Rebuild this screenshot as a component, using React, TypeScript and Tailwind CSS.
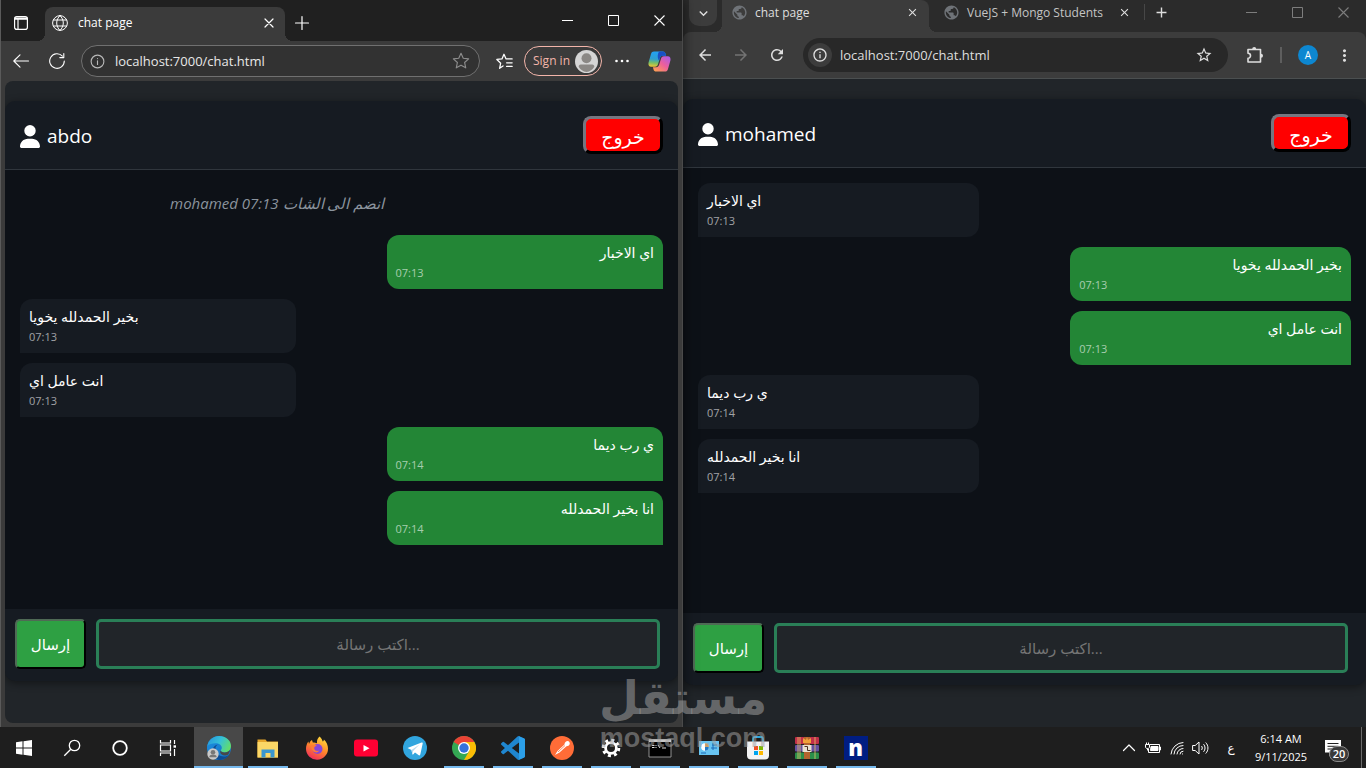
import React from 'react';
import { FaUser } from 'react-icons/fa6';
import {
  MdAdd, MdArrowBack, MdArrowForward, MdClose, MdExpandMore, MdInfoOutline, MdMoreVert,
  MdPublic, MdRefresh, MdStarOutline,
} from 'react-icons/md';

type Message = { text: string; time: string; mine: boolean };

const abdoMessages: Message[] = [
  { text: 'اي الاخبار', time: '07:13', mine: true },
  { text: 'بخير الحمدلله يخويا', time: '07:13', mine: false },
  { text: 'انت عامل اي', time: '07:13', mine: false },
  { text: 'ي رب ديما', time: '07:14', mine: true },
  { text: 'انا بخير الحمدلله', time: '07:14', mine: true },
];

const mohamedMessages: Message[] = abdoMessages.map(m => ({ ...m, mine: !m.mine }));

const Line = ({ d, className = 'size-4', width = 1.2 }: { d: string; className?: string; width?: number }) => (
  <svg viewBox="0 0 16 16" className={className} fill="none" stroke="currentColor" strokeWidth={width} strokeLinecap="round" strokeLinejoin="round" aria-hidden="true">
    <path d={d} />
  </svg>
);

const IconButton = ({ label, className, children }: { label: string; className: string; children: React.ReactNode }) => (
  <button type="button" aria-label={label} className={`flex shrink-0 items-center justify-center ${className}`}>{children}</button>
);

const star = 'M8 1.2l2 4.4 4.8.5-3.6 3.2 1 4.8L8 11.7l-4.2 2.4 1-4.8L1.2 6.1 6 5.6z';

const WindowControls = ({ className }: { className: string }) => (
  <div className={`ml-auto flex ${className}`}>
    <IconButton label="Minimize" className="h-8 w-[46px]"><svg viewBox="0 0 11 11" className="size-[11px]" stroke="currentColor"><path d="M0 5.5h11" /></svg></IconButton>
    <IconButton label="Maximize" className="h-8 w-[46px]"><svg viewBox="0 0 11 11" className="size-[11px]" stroke="currentColor" fill="none"><path d="M.5.5h10v10H.5z" /></svg></IconButton>
    <IconButton label="Close" className="h-8 w-[46px]"><svg viewBox="0 0 11 11" className="size-[11px]" stroke="currentColor" strokeWidth="1.1"><path d="M.5.5l10 10M10.5.5l-10 10" /></svg></IconButton>
  </div>
);

const Chat = ({ name, joined, messages }: { name: string; joined?: string; messages: Message[] }) => (
  <section className="flex flex-1 flex-col overflow-hidden rounded-[10px] bg-[#161b22] text-white shadow-[0_2px_8px_rgba(0,0,0,0.45)]">
    <header className="flex h-[69px] items-start justify-between border-b border-[#30363d] px-[15px] pt-[15px]">
      <h1 className="flex items-center gap-[7px] text-[19px] leading-10">
        <FaUser className="h-[23px] w-5" />
        {name}
      </h1>
      <button type="button" className="flex h-[38px] w-20 items-center justify-center rounded-lg border-[3px] border-t-[#767680] border-r-black border-b-black border-l-[#767680] bg-[#ff0000] pt-1 text-[19px] leading-6 font-medium">خروج</button>
    </header>
    <div className="flex flex-1 flex-col gap-[10px] bg-[#0d1117] p-[15px]">
      {joined && <p className="mb-1 w-4/5 text-center text-[15px] leading-9 text-[#8b949e] italic">{joined}</p>}
      {messages.map((m, i) => (
        <div key={i} className={m.mine
          ? 'w-[43%] self-end rounded-xl rounded-br-none bg-[#238636] px-[9px] pt-[6px] pb-2'
          : 'w-[43%] self-start rounded-xl rounded-bl-none bg-[#161b22] px-[9px] pt-[6px] pb-2'}>
          <p className={m.mine ? 'text-right text-[14px] leading-6' : 'text-left text-[14px] leading-6'}>{m.text}</p>
          <time className="block text-[11px] leading-4 text-white/60">{m.time}</time>
        </div>
      ))}
    </div>
    <form className="flex h-[72px] items-start gap-[10px] py-[10px] pr-[18px] pl-[10px]" onSubmit={e => e.preventDefault()}>
      <button type="submit" className="h-[50px] w-[71px] shrink-0 rounded-[5px] border-2 border-t-[#4f6a55] border-r-black border-b-black border-l-[#4f6a55] bg-[#2ea043] text-[15px] leading-6">إرسال</button>
      <input type="text" aria-label="اكتب رسالة" placeholder="اكتب رسالة..." className="h-[50px] min-w-0 flex-1 rounded-[5px] border-[3px] border-[#2a7f57] bg-[#212529] text-center text-[15px] text-white outline-none placeholder:text-[#757575]" />
    </form>
  </section>
);

const EdgeWindow = () => (
  <div className="relative z-10 flex flex-col border-x border-l-[#5a5a5a] border-r-[#4a4a4a] bg-[#3b3b3b] text-white shadow-[0_0_12px_rgba(0,0,0,0.6)]">
    <div className="flex h-[41px] items-center bg-[#202020]">
      <IconButton label="Tab actions" className="h-8 w-10 pt-1">
        <svg viewBox="0 0 14 14" className="size-[14px]" fill="none" stroke="currentColor" strokeWidth="1.2"><rect x=".6" y=".6" width="12.8" height="12.8" rx="2.2" /><path d="M.6 3.2h12.8M.6 2.2h12.8M4 3.5v10" /></svg>
      </IconButton>
      <div className="relative ml-1 flex h-[34px] w-60 items-center self-end rounded-t-lg bg-[#3b3b3b] pr-2 pb-[2px] pl-[7px]">
        <span className="absolute bottom-0 -left-2 size-2 bg-[radial-gradient(circle_at_0_0,transparent_8px,#3b3b3b_8px)]" />
        <span className="absolute -right-2 bottom-0 size-2 bg-[radial-gradient(circle_at_100%_0,transparent_8px,#3b3b3b_8px)]" />
        <Line d="M8 .6a7.4 7.4 0 100 14.8A7.4 7.4 0 008 .6zM8 .6c-4.5 4-4.5 10.8 0 14.8M8 .6c4.5 4 4.5 10.8 0 14.8M1.4 5h13.2M1.4 11h13.2" width={1} />
        <span className="ml-[10px] flex-1 text-[12px] leading-4">chat page</span>
        <IconButton label="Close tab" className="size-4"><Line d="M4 4l8 8M12 4l-8 8" /></IconButton>
      </div>
      <IconButton label="New tab" className="h-8 w-[34px] pt-1"><Line d="M8 1.5v13M1.5 8h13" width={1.2} /></IconButton>
      <WindowControls className="text-white" />
    </div>
    <div className="flex h-10 items-center pr-[6px] pl-[2px]">
      <IconButton label="Back" className="h-8 w-9"><Line d="M15.5 8H.8M7 1.8L.8 8 7 14.2" width={1.1} /></IconButton>
      <IconButton label="Refresh" className="h-8 w-9"><Line d="M15.3 8A7.3 7.3 0 1113.4 3.1M14.8.6v4h-4" width={1.1} /></IconButton>
      <div className="ml-[6px] flex h-8 min-w-0 flex-1 items-center rounded-full border border-[#707070] bg-[#323232] px-2">
        <Line d="M8 1.2a6.8 6.8 0 100 13.6A6.8 6.8 0 008 1.2zM8 7.2v4M8 4.8v.1" className="size-[15px] shrink-0 text-[#b8b8b8]" />
        <input type="text" aria-label="Address" defaultValue="localhost:7000/chat.html" className="ml-[10px] min-w-0 flex-1 bg-transparent text-[13px] leading-5 text-[#e8e8e8] outline-none" />
        <IconButton label="Add to favorites" className="mr-[2px] size-4 text-[#8d8d8d]"><Line d={star} className="size-[18px] shrink-0" width={1} /></IconButton>
      </div>
      <IconButton label="Favorites" className="ml-1 h-8 w-10"><Line d="M6.6 12.2L3.4 14.4l1-4.8L.8 6.1l4.8-.5L7.5 1.2l2 4.4h5.7M10 9.2h5.2M10 12.6h5.2" width={1.2} className="size-[17px]" /></IconButton>
      <button type="button" className="flex h-[30px] w-[78px] shrink-0 items-center justify-between rounded-full border border-[#f3b5aa] pr-[3px] pl-2 text-[12px] leading-4 text-[#f3b5aa]">
        Sign in
        <svg viewBox="0 0 24 24" className="size-[23px] shrink-0"><circle cx="12" cy="12" r="12" fill="#d5d5d5" /><circle cx="12" cy="8.7" r="5.2" fill="#8b8885" /><path d="M3.8 17.5c0-2.2 2-2.4 3.5-2.4h9.4c1.5 0 3.5.2 3.5 2.4A11.5 11.5 0 0112 23a11.5 11.5 0 01-8.2-5.5z" fill="#8b8885" /></svg>
      </button>
      <IconButton label="Settings and more" className="h-8 w-10"><svg viewBox="0 0 16 16" className="size-4" fill="currentColor"><circle cx="2.5" cy="8" r="1.3" /><circle cx="8" cy="8" r="1.3" /><circle cx="13.5" cy="8" r="1.3" /></svg></IconButton>
      <IconButton label="Copilot" className="h-8 w-[34px]">
        <svg viewBox="0 0 24 24" className="size-[23px]">
          <defs>
            <linearGradient id="copA" x1=".4" y1="0" x2=".3" y2="1"><stop stopColor="#22a0f5" /><stop offset=".5" stopColor="#2e9fd0" /><stop offset=".75" stopColor="#78bf65" /><stop offset="1" stopColor="#f0c534" /></linearGradient>
            <linearGradient id="copB" x1="1" y1="0" x2=".1" y2="1"><stop stopColor="#a45bf0" /><stop offset=".5" stopColor="#ec5f9c" /><stop offset="1" stopColor="#ffa24f" /></linearGradient>
          </defs>
          <path d="M6.2 1.500h9.300c1.500 0 2.300.8 2.700 2.200L18.900 6h-3.400c-1.700 0-2.600.8-3.100 2.500l-1.900 6.200c-.5 1.800-1.400 2.800-3.200 2.800H3.500C1 17.500 0 15.500.6 13L3.200 4C3.700 2.300 4.700 1.500 6.200 1.500z" fill="url(#copA)" />
          <path d="M17.800 22.500H8.500c-1.500 0-2.300-.8-2.700-2.200L5.100 18h3.400c1.700 0 2.600-.8 3.100-2.500l1.900-6.200c.5-1.800 1.400-2.800 3.200-2.800h3.800c2.500 0 3.500 2 2.900 4.500l-2.600 9c-.5 1.700-1.500 2.500-3 2.500z" fill="url(#copB)" />
          <path d="M11.500 1.500h4c1.500 0 2.300.8 2.700 2.200L18.900 6h-3.400c-1.700 0-2.600.8-3.100 2.500L11.500 11C9.500 8 10 4 11.500 1.500z" fill="#1a4fc4" />
        </svg>
      </IconButton>
    </div>
    <main className="mx-1 mb-1 flex flex-1 flex-col overflow-hidden rounded-lg bg-[#212529] pt-5 pb-[42px]">
      <Chat name="abdo" joined="mohamed 07:13 انضم الى الشات" messages={abdoMessages} />
    </main>
  </div>
);

const ChromeWindow = () => (
  <div className="flex flex-col bg-[#2b2b2b] text-[#dedede]">
    <div className="flex h-8 items-start pl-[6px]">
      <IconButton label="Search tabs" className="h-[26px] w-7 rounded-b-[10px] bg-[#3c3c3c]"><MdExpandMore className="size-[17px]" /></IconButton>
      <div className="relative ml-[5px] flex h-8 w-[207px] items-center rounded-tr-lg bg-[#3c3c3c] pr-[9px] pb-[7px] pl-[9px]">
        <span className="absolute bottom-0 -left-2 size-2 bg-[radial-gradient(circle_at_0_0,transparent_8px,#3c3c3c_8px)]" />
        <span className="absolute -right-2 bottom-0 size-2 bg-[radial-gradient(circle_at_100%_0,transparent_8px,#3c3c3c_8px)]" />
        <MdPublic className="size-[17px] text-[#6f7378]" />
        <span className="ml-[7px] flex-1 text-[12px] leading-4">chat page</span>
        <IconButton label="Close tab" className="size-4"><MdClose className="size-[13px]" /></IconButton>
      </div>
      <div className="flex h-[25px] w-[215px] items-center pr-3 pl-[14px]">
        <MdPublic className="size-[17px] text-[#6f7378]" />
        <span className="ml-[7px] flex-1 text-[12px] leading-4 whitespace-nowrap text-[#c4c4c4]">VueJS + Mongo Students</span>
        <IconButton label="Close tab" className="size-4"><MdClose className="size-[13px]" /></IconButton>
      </div>
      <span className="mt-1 h-4 w-px bg-[#474747]" />
      <IconButton label="New tab" className="h-[25px] w-8"><MdAdd className="size-[17px]" /></IconButton>
      <WindowControls className="-mt-1 text-[#7d7d7d]" />
    </div>
    <div className="flex h-[47px] items-center rounded-t-lg border-b border-[#4b4f50] bg-[#3c3c3c] px-1">
      <IconButton label="Back" className="h-8 w-9"><MdArrowBack className="size-[18px]" /></IconButton>
      <IconButton label="Forward" className="h-8 w-9 text-[#737373]"><MdArrowForward className="size-[18px]" /></IconButton>
      <IconButton label="Reload" className="h-8 w-9"><MdRefresh className="size-[18px]" /></IconButton>
      <div className="ml-2 flex h-[34px] min-w-0 flex-1 items-center rounded-full bg-[#282828] pr-4 pl-[5px]">
        <span className="flex size-6 shrink-0 items-center justify-center rounded-full bg-[#3c3c3c]"><MdInfoOutline className="size-4" /></span>
        <input type="text" aria-label="Address" defaultValue="localhost:7000/chat.html" className="ml-2 min-w-0 flex-1 bg-transparent text-[13px] leading-5 outline-none" />
        <IconButton label="Bookmark" className="size-4"><MdStarOutline className="size-[18px] shrink-0" /></IconButton>
      </div>
      <IconButton label="Extensions" className="ml-[2px] h-8 w-[50px]">
        <svg viewBox="0 0 18 18" className="size-[18px]"><path d="M2 3.500h12.500v12.500H2v-3.800a2.500 2.500 0 000-5z" fill="none" stroke="currentColor" strokeWidth="1.600" strokeLinejoin="round" /><path d="M6.200 3a2 2 0 014 0zM15 7.800a2 2 0 010 4z" fill="currentColor" /></svg>
      </IconButton>
      <span className="h-4 w-[2px] bg-[#5e5e5e]" />
      <IconButton label="Profile" className="ml-4 size-5 rounded-full bg-[#0d87d1] text-[10px] leading-4 text-white">A</IconButton>
      <IconButton label="Menu" className="ml-2 h-8 w-9"><MdMoreVert className="size-[19px]" /></IconButton>
    </div>
    <main className="flex flex-1 flex-col bg-[#212529] pt-5 pb-[42px]">
      <Chat name="mohamed" messages={mohamedMessages} />
    </main>
  </div>
);

const systemItems = [
  { name: 'Start', icon: <path fill="#fff" d="M4 6.3l6.500-1v6.200H4zm7.500-1.100L20 4v7.500h-8.500zM4 12.500h6.500v6.200l-6.500-1zm7.500 0H20V20l-8.500-1.200z" /> },
  { name: 'Search', icon: <g fill="none" stroke="#fff" strokeWidth="1.3"><circle cx="14.5" cy="9.5" r="5.2" /><path d="M10.8 13.300L4.300 19.800" /></g> },
  { name: 'Cortana', icon: <circle cx="12" cy="12" r="6.800" fill="none" stroke="#fff" strokeWidth="1.800" /> },
  { name: 'Task View', icon: <g fill="none" stroke="#fff" strokeWidth="1.200"><path d="M4.500 4v3h10V4M4.500 20v-3h10v3M4.500 9h10v6h-10zM18.500 4v4M18.500 13v7" /><path d="M17.500 10.500h2.500" strokeWidth="2.400" /></g> },
];

const apps = [
  { name: 'Microsoft Edge', active: true, open: true, icon: <>
    <defs>
      <linearGradient id="edA" x1="0" y1=".2" x2="1" y2=".6"><stop stopColor="#2697dd" /><stop offset=".5" stopColor="#35c1d8" /><stop offset="1" stopColor="#63dd68" /></linearGradient>
      <linearGradient id="edB" x1="0" y1="0" x2="1" y2="1"><stop stopColor="#1c8fe0" /><stop offset="1" stopColor="#1472c4" /></linearGradient>
    </defs>
    <circle cx="12" cy="12" r="12" fill="url(#edB)" />
    <path d="M8.500 12c0 5 4 8.500 8.500 8.500 2 0 4-.6 5-1.800C20 22 16 24 12 24 8 23 5.500 19 5.500 15c0-3.500 2.500-6.500 6-6.500-2 .5-3 2-3 3.500z" fill="#0d4c94" />
    <path d="M.3 10C1.500 4.200 6.200 0 12 0c7 0 12 4.500 12 10 0 3.800-2.800 6.400-6.300 6.400-2.600 0-3.900-1.100-3.900-1.900 0-.6 1-1.100 1-2.800C14.800 9 12 7.200 8.500 7.200 5 7.200 2 8 .3 10z" fill="url(#edA)" />
    <path d="M13.800 14.500c0 .8 1.300 1.900 3.900 1.900 2 0 4-.9 5.300-2.300-.3 2-1 3.500-2 4.700-2 .9-4.500.9-6.300-.3-1.700-1-2-3-.9-4z" fill="#484848" />
    <circle cx="6" cy="18" r="5.700" fill="#c9c9c9" /><circle cx="6" cy="16.300" r="2.300" fill="#777" /><path d="M2.300 21.200a3.700 2.800 0 017.400 0z" fill="#777" /></> },
  { name: 'File Explorer', open: true, icon: <><path d="M1.500 3.500h8l1.500 2h11v16h-20.500z" fill="#e6a62b" /><path d="M1.500 6h20.500v15.500H1.500z" fill="#fbd766" /><path d="M5.500 21.500v-8h13v8h-4V17h-5v4.500z" fill="#3a97cf" /></> },
  { name: 'Firefox', icon: <>
    <defs><linearGradient id="ffA" x1=".8" y1="0" x2=".3" y2="1"><stop stopColor="#ffe23e" /><stop offset=".5" stopColor="#ff8a2a" /><stop offset="1" stopColor="#f02a5d" /></linearGradient></defs>
    <path d="M14.500.5c2 1.800 2.700 3.500 3.200 5 .8-.3 1.200-1.300 1.200-2 2.800 2.700 4.100 5.900 4.100 9A11 11 0 011 13c0-3 .8-5.500 2.400-7.500L4 8c.5-1.500 1.300-3 3-4l.8 2.500c2 0 3.200.3 4.200.8-.3-3 .5-5 2.500-6.800z" fill="url(#ffA)" /><circle cx="12.500" cy="13" r="5" fill="#8746d8" /><path d="M6 9.500c2.200-1.300 4.500-.9 6 .5-2.500.2-3 1.500-2.700 2.700.4 2 2.800 2.700 5 1.900C12 18.500 6 16 6 9.500z" fill="#ff7c35" /></> },
  { name: 'YouTube', icon: <><rect x="0" y="3.500" width="24" height="17" rx="3" fill="#ff0033" /><path d="M9.500 9v6.500l6-3.200z" fill="#fff" /></> },
  { name: 'Telegram', icon: <><circle cx="12" cy="12" r="12" fill="#31a5de" /><path d="M4.500 12L18.600 6.500c.7-.3 1.300.2 1.100 1.100l-2.400 11c-.2.800-.8 1-1.500.6L12 16.500l-1.900 1.900c-.3.3-.7.3-.8-.3L8.500 14z" fill="#fff" /><path d="M8.500 14l8-5.500-6.400 6.500-.6 3.500z" fill="#b9d9ec" /></> },
  { name: 'Chrome', open: true, icon: <><circle cx="12" cy="12" r="12" fill="#34a853" /><path d="M12 12L1.600 6A12 12 0 0122.400 6z" fill="#ea4335" /><path d="M12 6h10.400A12 12 0 0112 24l5.200-9z" fill="#fbbc05" /><circle cx="12" cy="12" r="6" fill="#fff" /><circle cx="12" cy="12" r="4.700" fill="#3472dc" /></> },
  { name: 'Visual Studio Code', open: true, icon: <>
    <path d="M23.150 2.587L18.210.21a1.494 1.494 0 0 0-1.705.29l-9.460 8.630-4.120-3.128a.999.999 0 0 0-1.276.057L.327 7.261A1 1 0 0 0 .326 8.740L3.899 12 .326 15.260a1 1 0 0 0 .001 1.479L1.650 17.940a.999.999 0 0 0 1.276.057l4.120-3.128 9.460 8.630a1.492 1.492 0 0 0 1.704.290l4.942-2.377A1.500 1.500 0 0 0 24 20.060V3.939a1.500 1.500 0 0 0-.850-1.352zm-5.146 14.861L10.826 12l7.178-5.448v10.896z" fill="#1f86cf" />
    <path d="M18 .2l5.200 2.400c.5.300.8.8.8 1.400v16c0 .6-.3 1.100-.8 1.400L18 23.800z" fill="#2c9fe8" /></> },
  { name: 'Postman', open: true, icon: <><circle cx="12" cy="12" r="12" fill="#ff6c37" /><path d="M5 19l2.500-4L15 8l2 1.800-7.500 6.700z" fill="#fff" /><path d="M14.500 8.300c0-2.800 3.500-4.300 4.800-2.300s-.3 4.300-2.800 4.200z" fill="#fff" /><path d="M8 16l7-6.500" stroke="#ff6c37" strokeWidth=".8" /></> },
  { name: 'Settings', open: true, icon: <g fill="none" stroke="#fff"><circle cx="12" cy="12" r="5.400" strokeWidth="2.800" /><circle cx="12" cy="12" r="7.800" strokeWidth="3" strokeDasharray="3 3.126" /></g> },
  { name: 'Command Prompt', open: true, icon: <><path d="M1 3.500h22v17.500H1z" fill="#000" stroke="#909090" /><path d="M1 3.500h22v2.500H1z" fill="#c8c8c8" /><path d="M4 9.500h2.500M4 11.500h2.500M8 9v1M8 11v1M10 9l2 3M14 12h4" stroke="#ddd" strokeWidth="1" /></> },
  { name: 'Control Panel', open: true, icon: <><rect x="2" y="5" width="20" height="14" fill="#68c4f1" /><circle cx="8" cy="11" r="3.800" fill="#fff" /><path d="M8 11V7.200A3.800 3.800 0 0111.800 11z" fill="#ee9b2b" /><path d="M8 11h3.800A3.800 3.800 0 018 14.800z" fill="#207ac8" /><path d="M15 9h5M14 12h6M16 7v7M4 17h5" stroke="#1b6bb8" /></> },
  { name: 'Microsoft Store', open: true, icon: <><path d="M7 6V3c0-1.500.8-2 2-2h6c1.200 0 2 .5 2 2v3" fill="none" stroke="#2ba8df" strokeWidth="1.800" /><path d="M1 5.500h22v14c0 2.500-1.500 4-4 4H5c-2.500 0-4-1.500-4-4z" fill="#f3f3f3" /><path d="M8 10h4v4H8z" fill="#f25022" /><path d="M13 10h4v4h-4z" fill="#7fba00" /><path d="M8 15h4v4H8z" fill="#00a4ef" /><path d="M13 15h4v4h-4z" fill="#ffb900" /></> },
  { name: 'WinRAR', open: true, icon: <><rect y="1" width="24" height="7" rx="1" fill="#c02f49" /><rect y="9" width="24" height="6.500" rx="1" fill="#6550a0" /><rect y="16.500" width="24" height="6.500" rx="1" fill="#2b8f4a" /><path d="M3 1v22M5 1v22M20 1v22" stroke="#e4c36a" strokeWidth=".8" /><path d="M9 1h6v22H9z" fill="#b4642e" /><path d="M8 2l3 2 1-3 1 3 3-2v5H8z" fill="#f0a13a" /><path d="M7.500 9h9v7h-9z" fill="#e9e1d2" /><path d="M9.500 10.500h3v4h3" fill="none" stroke="#4b3022" /></> },
];

const Taskbar = () => (
  <nav aria-label="Taskbar" className="relative z-10 flex h-[41px] items-stretch bg-[#1e1e1e] text-white">
    {systemItems.map(item => (
      <IconButton key={item.name} label={item.name} className="w-12"><svg viewBox="0 0 24 24" className="size-6">{item.icon}</svg></IconButton>
    ))}
    <div className="ml-[2px] flex">
      {apps.map(app => (
        <button key={app.name} type="button" aria-label={app.name} className={app.active ? 'flex w-[49px] flex-col items-center bg-[#484848] pt-[9px]' : 'flex w-[49px] flex-col items-center pt-[9px]'}>
          <svg viewBox="0 0 24 24" className="size-6">{app.icon}</svg>
          {app.open && <span className={app.active ? 'mt-auto h-[2px] w-full bg-[#76b9ed]' : 'mt-auto h-[2px] w-10 bg-[#76b9ed]'} />}
        </button>
      ))}
      <button type="button" aria-label="n" className="flex w-[49px] flex-col items-center pt-[9px]">
        <span className="flex size-6 items-center justify-center bg-[#001d82] pb-[3px] text-[22px] leading-5 font-extrabold">n</span>
        <span className="mt-auto h-[2px] w-10 bg-[#76b9ed]" />
      </button>
    </div>
    <div className="ml-auto flex items-center">
      <IconButton label="Show hidden icons" className="h-full w-6"><Line d="M2.5 10.5L8 5l5.5 5.5" /></IconButton>
      <IconButton label="Battery" className="h-full w-6"><svg viewBox="0 0 16 16" className="size-4" fill="none" stroke="#fff"><path d="M5 4.500h9.500v8H3.500V9M14.500 7h1v3h-1M.5 4.500h4V7c0 1-.8 1.500-2 1.500S.5 8 .5 7zM1.500 2.500v2M3.500 2.500v2M2.500 8.500v2" /><path d="M6 6.500h7v4H5.500z" fill="#fff" /></svg></IconButton>
      <IconButton label="Wi-Fi" className="h-full w-6"><Line d="M2 14A12.500 12.500 0 0114 2.500M5 14a9 9 0 019-8.500M8 14a6 6 0 016-5.500M11 14a3 3 0 013-2.800M13.500 13.900v.1" width={1} /></IconButton>
      <IconButton label="Volume" className="h-full w-6"><svg viewBox="0 0 18 16" className="h-4 w-[18px]" fill="none" stroke="#fff"><path d="M.6 5.500h2.600L7 2v12l-3.800-3.500H.6zM9.500 6c1 1.200 1 2.800 0 4M11.500 4.200c2 2.200 2 5.400 0 7.600M13.700 2.500c3 3.200 3 7.800 0 11" /></svg></IconButton>
      <button type="button" aria-label="Input language" className="h-full w-9 text-[12px]">ع</button>
      <button type="button" className="w-16 text-center text-[11px] leading-[18px] whitespace-nowrap"><span className="block">6:14 AM</span><span className="block">9/11/2025</span></button>
      <IconButton label="Notifications" className="relative h-full w-10">
        <svg viewBox="0 0 16 16" className="size-4"><path d="M0 0h16v12.500H8.500L4 16v-3.500H0z" fill="#fff" /><path d="M2.500 3.500h11M2.500 6.300h11M2.500 9h7" stroke="#222" /></svg>
        <span className="absolute top-[19px] right-1 flex h-4 w-5 items-center justify-center rounded-full border border-[#8a8a8a] bg-[#3a3a3a] text-[11px] leading-4 font-semibold">20</span>
      </IconButton>
      <span className="mr-1 ml-2 h-full w-px bg-[#6a6a6a]" />
    </div>
  </nav>
);

export default function App() {
  return (
    <div className="relative flex min-h-screen flex-col bg-[#2b2b2b] font-['Open_Sans','DejaVu_Sans',sans-serif]">
      <div className="grid flex-1 grid-cols-2">
        <EdgeWindow />
        <ChromeWindow />
      </div>
      <Taskbar />
      <div className="pointer-events-none absolute bottom-4 left-1/2 z-20 flex w-[164px] -translate-x-1/2 flex-col items-center font-bold text-[#a0a0a0]/55">
        <span className="font-['DejaVu_Sans',sans-serif] text-[46px] leading-[52px]">مستقل</span>
        <span className="font-['Liberation_Sans',sans-serif] text-[27px] leading-7">mostaql.com</span>
      </div>
    </div>
  );
}
